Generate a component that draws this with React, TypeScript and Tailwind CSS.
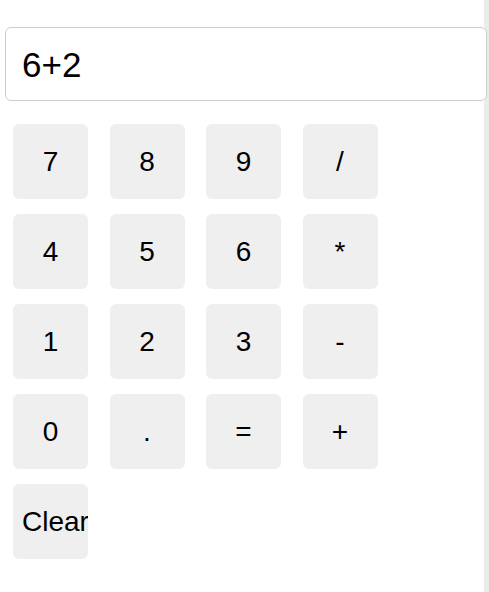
const KEYS = ['7', '8', '9', '/', '4', '5', '6', '*', '1', '2', '3', '-', '0', '.', '=', '+'];

export default function App() {
  return (
    <div className="min-h-screen bg-white border-r-[5px] border-[#ebebeb] font-['Liberation_Sans',Arial,sans-serif] text-black">
      {/* Display */}
      <div className="pt-[27px] pl-[5px]">
        <div className="w-[482px] h-[74px] border border-[#cccccc] rounded-[6px] bg-white flex items-center pl-[16px] text-[35px] leading-none">
          6+2
        </div>
      </div>

      {/* Keypad */}
      <div className="mt-[23px] ml-[13px] grid grid-cols-[repeat(4,75px)] gap-x-[21.5px] gap-y-[15px]">
        {KEYS.map((k) => (
          <button
            key={k}
            className="w-[75px] h-[75px] rounded-[6px] bg-[#efefef] flex items-center justify-center text-[28px] leading-none"
          >
            {k}
          </button>
        ))}
        <button className="w-[75px] h-[75px] rounded-[6px] bg-[#efefef] flex items-center justify-start pl-[9px] overflow-hidden whitespace-nowrap text-[28px] leading-none">
          Clear
        </button>
      </div>
    </div>
  );
}
